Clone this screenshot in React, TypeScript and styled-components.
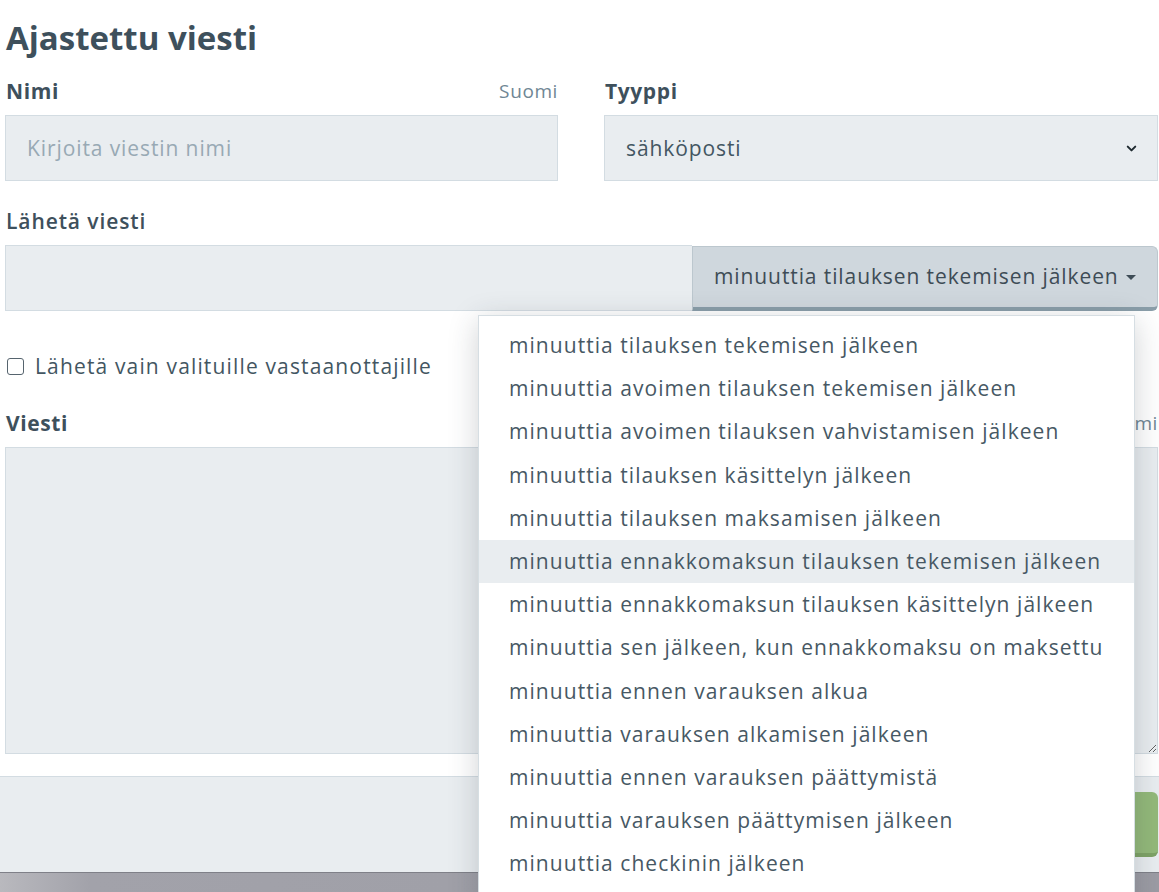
import React from 'react';
import styled, {createGlobalStyle} from 'styled-components';
import {ChevronDown} from 'lucide-react';

const GlobalStyle = createGlobalStyle`
  html, body {
    margin: 0;
    padding: 0;
    background: #ffffff;
    overflow: hidden;
  }

  body {
    font-family: "Open Sans", "Noto Sans", sans-serif;
    color: #435662;
  }

  * {
    box-sizing: border-box;
  }
`;

const triggers = [
    'minuuttia tilauksen tekemisen jälkeen',
    'minuuttia avoimen tilauksen tekemisen jälkeen',
    'minuuttia avoimen tilauksen vahvistamisen jälkeen',
    'minuuttia tilauksen käsittelyn jälkeen',
    'minuuttia tilauksen maksamisen jälkeen',
    'minuuttia ennakkomaksun tilauksen tekemisen jälkeen',
    'minuuttia ennakkomaksun tilauksen käsittelyn jälkeen',
    'minuuttia sen jälkeen, kun ennakkomaksu on maksettu',
    'minuuttia ennen varauksen alkua',
    'minuuttia varauksen alkamisen jälkeen',
    'minuuttia ennen varauksen päättymistä',
    'minuuttia varauksen päättymisen jälkeen',
    'minuuttia checkinin jälkeen',
];

const App = () => {
    return (
        <Page>
            <GlobalStyle/>
            <Modal>
                <Body>
                    <Title>Ajastettu viesti</Title>
                    <Columns>
                        <Field>
                            <LabelRow>
                                <Label>Nimi</Label>
                                <Lang>Suomi</Lang>
                            </LabelRow>
                            <TextInput placeholder='Kirjoita viestin nimi'/>
                        </Field>
                        <Field>
                            <LabelRow>
                                <Label>Tyyppi</Label>
                            </LabelRow>
                            <SelectBox>
                                <span>sähköposti</span>
                                <ChevronDown size={15} strokeWidth={3.2} color='#1f2a30'/>
                            </SelectBox>
                        </Field>
                    </Columns>

                    <Section $gap={26}>
                        <LabelRow>
                            <Label $light>Lähetä viesti</Label>
                        </LabelRow>
                        <InputGroup>
                            <TextInput $flat/>
                            <Toggle>
                                minuuttia tilauksen tekemisen jälkeen
                                <Caret/>
                            </Toggle>
                            <Menu>
                                {triggers.map((item, i) => (
                                    <MenuItem key={item} $active={i === 5}>{item}</MenuItem>
                                ))}
                            </Menu>
                        </InputGroup>
                    </Section>

                    <CheckRow>
                        <Check type='checkbox'/>
                        <span>Lähetä vain valituille vastaanottajille</span>
                    </CheckRow>

                    <Section $gap={29}>
                        <LabelRow>
                            <Label>Viesti</Label>
                            <Lang>Suomi</Lang>
                        </LabelRow>
                        <MessageArea/>
                    </Section>
                </Body>
                <Footer>
                    <SaveButton>Tallenna</SaveButton>
                </Footer>
            </Modal>
        </Page>
    );
};

const Page = styled.div`
  width: 1159px;
  height: 892px;
  overflow: hidden;
  background: linear-gradient(90deg, #b9b9be 0, #a2a2aa 90px, #9c9ca4 100%);
`;

const Modal = styled.div`
  background: #ffffff;
  box-shadow: 0 1px 0 #7f8088;
`;

const Body = styled.div`
  padding: 14px 1px 22px 5px;
`;

const Title = styled.h2`
  margin: 0 0 15px 1px;
  font-size: 33px;
  line-height: 48px;
  font-weight: 700;
  color: #3e505c;
`;

const Columns = styled.div`
  display: grid;
  grid-template-columns: 553px 554px;
  column-gap: 46px;
`;

const Field = styled.div`
  display: flex;
  flex-direction: column;
`;

const Section = styled.div<{ $gap: number }>`
  margin-top: ${p => p.$gap}px;
  display: flex;
  flex-direction: column;
`;

const LabelRow = styled.div`
  display: flex;
  justify-content: space-between;
  align-items: center;
  height: 28px;
  margin-bottom: 10px;
  padding-left: 1px;
`;

const Label = styled.span<{ $light?: boolean }>`
  font-size: 21px;
  letter-spacing: ${p => (p.$light ? 0.9 : 0.6)}px;
  font-weight: ${p => (p.$light ? 600 : 700)};
  color: #3e505c;
`;

const Lang = styled.span`
  font-size: 19px;
  letter-spacing: 0.6px;
  color: #6f8694;
`;

const TextInput = styled.input<{ $flat?: boolean }>`
  height: 66px;
  width: 100%;
  ${p => (p.$flat ? 'flex: 1;' : '')}
  border: 1px solid #d3dce2;
  border-right: ${p => (p.$flat ? 'none' : '1px solid #d3dce2')};
  background: #e9edf0;
  padding: 0 21px;
  font-family: inherit;
  font-size: 21px;
  letter-spacing: 0.9px;
  color: #435662;
  outline: none;

  &::placeholder {
    color: #98a9b4;
  }
`;

const SelectBox = styled.div`
  height: 66px;
  border: 1px solid #d3dce2;
  background: #e9edf0;
  padding: 0 18px 0 21px;
  display: flex;
  align-items: center;
  justify-content: space-between;
  font-size: 21px;
  letter-spacing: 0.9px;
  color: #435662;
`;

const InputGroup = styled.div`
  position: relative;
  display: flex;
  height: 66px;
`;

const Toggle = styled.div`
  width: 466px;
  flex-shrink: 0;
  display: flex;
  align-items: center;
  gap: 7px;
  padding: 0 0 2px 21px;
  margin-top: 1px;
  background: #cfd7dd;
  border: 1px solid #bcc7ce;
  border-bottom: 4px solid #8a9ea9;
  border-radius: 0 6px 6px 0;
  font-size: 21px;
  letter-spacing: 0.9px;
  color: #3e4c56;
  white-space: nowrap;
`;

const Caret = styled.span`
  width: 0;
  height: 0;
  border-left: 5px solid transparent;
  border-right: 5px solid transparent;
  border-top: 5px solid #3e4c56;
  margin-top: 2px;
`;

const Menu = styled.ul`
  position: absolute;
  top: 70px;
  right: 23px;
  width: 657px;
  margin: 0;
  padding: 8px 0 30px;
  list-style: none;
  background: #ffffff;
  border: 1px solid #d6dee3;
  box-shadow: 0 6px 28px rgba(40, 50, 60, 0.22);
  z-index: 10;
`;

const MenuItem = styled.li<{ $active?: boolean }>`
  height: 43.2px;
  line-height: 43px;
  padding: 0 30px;
  font-size: 21px;
  letter-spacing: 1.05px;
  color: #475864;
  white-space: nowrap;
  background: ${p => (p.$active ? '#e9edf0' : 'transparent')};
`;

const CheckRow = styled.label`
  margin-top: 41px;
  display: flex;
  align-items: center;
  gap: 11px;
  height: 28px;
  padding-left: 2px;
  font-size: 21px;
  letter-spacing: 1.15px;
  color: #435662;
`;

const Check = styled.input`
  appearance: none;
  margin: 0;
  width: 17px;
  height: 17px;
  border: 1.5px solid #56646e;
  border-radius: 3px;
  background: #ffffff;
`;

const MessageArea = styled.textarea`
  height: 307px;
  width: 100%;
  border: 1px solid #d3dce2;
  background: #e9edf0;
  resize: vertical;
  outline: none;
  font-family: inherit;
`;

const Footer = styled.div`
  height: 96px;
  border-top: 1px solid #d3dce2;
  background: #e9edf0;
  display: flex;
  justify-content: flex-end;
  align-items: flex-start;
  padding: 15px 1px 0 0;
`;

const SaveButton = styled.div`
  width: 150px;
  height: 65px;
  display: flex;
  align-items: center;
  justify-content: center;
  background: #93b97a;
  border-bottom: 4px solid #7ea366;
  border-radius: 6px;
  color: #ffffff;
  font-size: 20px;
`;

export default App;
